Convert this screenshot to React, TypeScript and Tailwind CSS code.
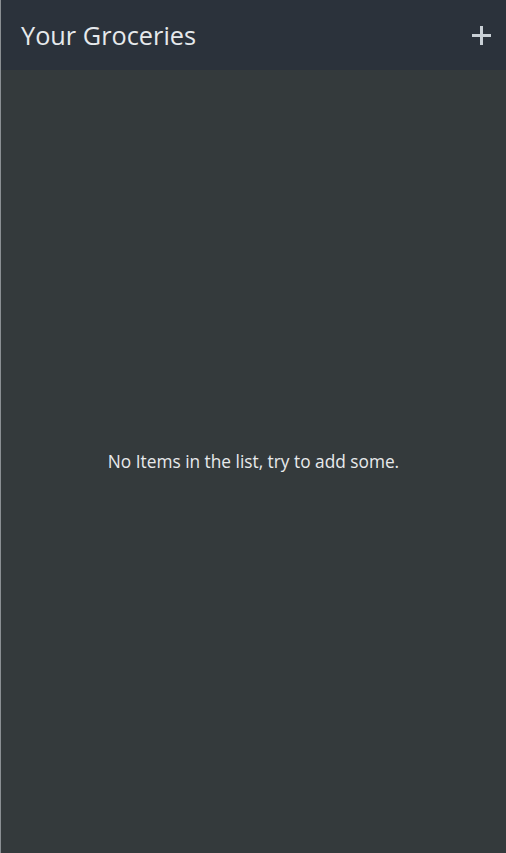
import React from "react";

export default function App() {
  return (
    <div
      className="w-[506px] h-[853px] flex flex-col bg-[#343a3c] border-l border-[#8a8f93] overflow-hidden"
      style={{ fontFamily: '"Open Sans", "Noto Sans", sans-serif' }}
    >
      <header className="h-[70px] shrink-0 bg-[#2b323b] flex items-center justify-between pl-[20px] pr-[15px]">
        <h1 className="text-[25.3px] text-[#e6e9ec] leading-none mt-[2px]">Your Groceries</h1>
        <button className="w-[20px] h-[20px] flex items-center justify-center">
          <svg width="19" height="19" viewBox="0 0 19 19">
            <rect x="8" y="0" width="3" height="19" fill="#c9d0d6" />
            <rect x="0" y="8" width="19" height="3" fill="#c9d0d6" />
          </svg>
        </button>
      </header>
      <main className="flex-1 flex items-center justify-center">
        <p className="text-[17.3px] text-[#e8eaec]">No Items in the list, try to add some.</p>
      </main>
    </div>
  );
}
